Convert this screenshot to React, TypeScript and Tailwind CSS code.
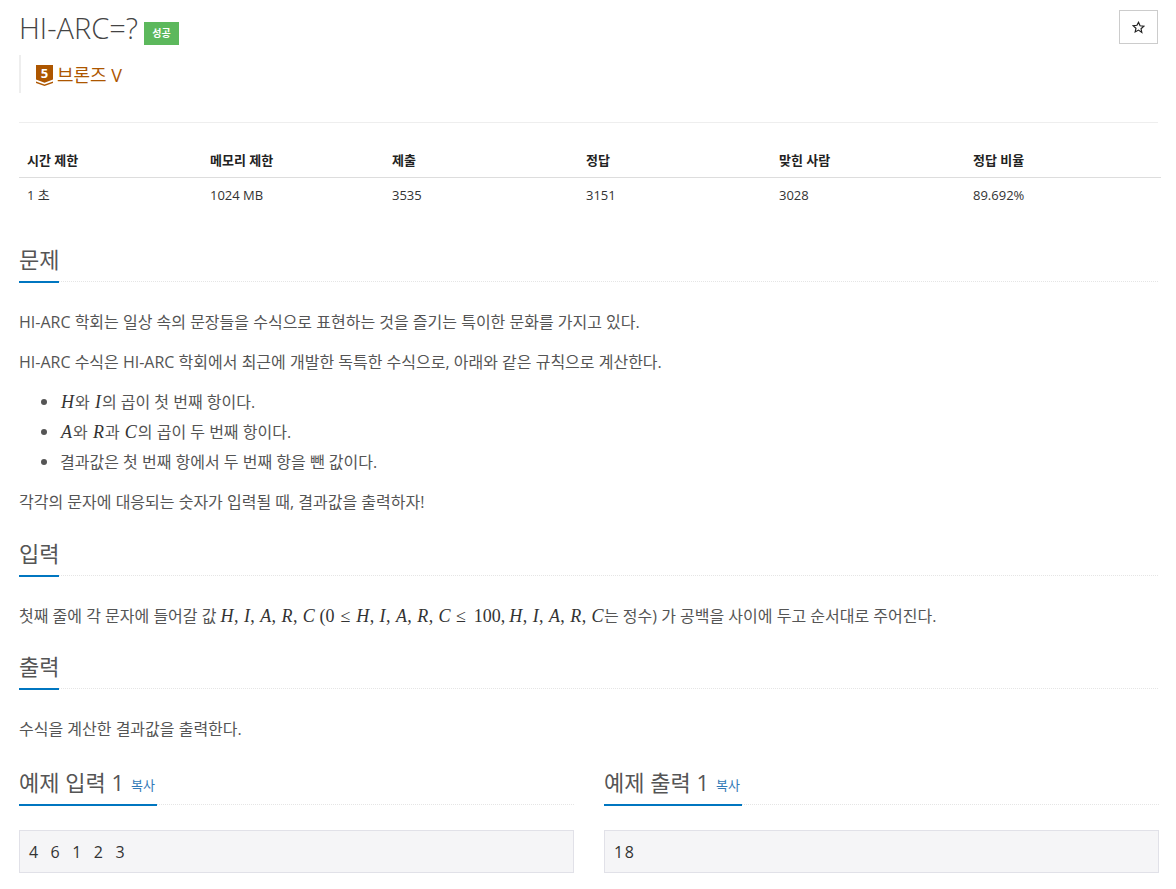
import React from "react";

const font = "font-['Open_Sans','Noto_Sans_CJK_KR',sans-serif]";

const M = ({ children }: { children: React.ReactNode }) => (
  <span className="font-['Liberation_Serif',serif] italic text-[18px] text-[#333] mx-[1px]">{children}</span>
);

const MathList = ({ items }: { items: string[] }) => (
  <span className="font-['Liberation_Serif',serif] italic text-[18px] text-[#333] tracking-[0.4px]">
    {items.map((item, index) => (
      <span key={`math_${index}`}>
        {item}
        {index < items.length - 1 && <span className="not-italic mr-[5px]">,</span>}
      </span>
    ))}
  </span>
);

const SectionHead = ({ title, copy, width }: { title: string; copy?: boolean; width: string }) => (
  <div className="border-b border-dotted border-[#e5e5e5] h-[40px] relative">
    <div className="flex items-baseline h-[34px] leading-[34px]">
      <span className="text-[22px] text-[#555]">{title}</span>
      {copy && <span className="text-[13px] text-[#337ab7] ml-[7px] -translate-y-px">복사</span>}
    </div>
    <div className={`absolute left-0 bottom-[-2px] h-[2px] bg-[#0076c0] ${width}`} />
  </div>
);

const SampleBox = ({ title, value }: { title: string; value: string }) => (
  <div className="flex-1">
    <SectionHead title={title} copy width="w-[138px]" />
    <pre className="mt-[25px] h-[43px] bg-[#f5f5f7] border border-[#e1e1e8] px-[9px] pt-[11px] text-[16px] leading-[20px] tracking-[1.65px] [word-spacing:5px] text-[#333] font-['Open_Sans',sans-serif]">
      {value}
    </pre>
  </div>
);

const Bullet = ({ children }: { children: React.ReactNode }) => (
  <li className="flex items-center h-[20px]">
    <span className="w-[6px] h-[6px] rounded-full bg-[#555] mr-[13px]" />
    <span>{children}</span>
  </li>
);

const stats = [
  ["시간 제한", "1 초", "w-[183px]"],
  ["메모리 제한", "1024 MB", "w-[182px]"],
  ["제출", "3535", "w-[194px]"],
  ["정답", "3151", "w-[193px]"],
  ["맞힌 사람", "3028", "w-[194px]"],
  ["정답 비율", "89.692%", "w-[196px]"],
];

const App = () => {
  return (
    <div className={`${font} bg-white h-[889px] overflow-hidden pl-[19px] pr-[18px] text-[16px] text-[#333]`}>
      <div className="flex justify-between pt-[8px]">
        <div className="flex items-start">
          <h1 className="text-[29px] leading-[40px] font-light text-[#444]">HI-ARC=?</h1>
          <span className="ml-[6px] mt-[14px] w-[35px] h-[23px] bg-[#5cb85c] text-white text-[10px] font-bold flex items-center justify-center">
            성공
          </span>
        </div>
        <button className="w-[39px] h-[34px] mt-[2px] border border-[#ccc] bg-white flex items-center justify-center">
          <svg width="13" height="13" viewBox="0 0 24 24" fill="none" stroke="#222" strokeWidth="2.2">
            <path d="M12 2.5l2.9 6.3 6.9.8-5.1 4.7 1.4 6.8L12 16.8l-6.1 3.4 1.4-6.8L2.200 8.700l6.900-.8z" />
          </svg>
        </button>
      </div>

      <div className="mt-[7px] h-[38px] border-l-[2px] border-[#eee] pl-[15px] flex items-center">
        <svg width="17" height="21" viewBox="0 0 17 21" className="mr-[4px] mt-[2px]">
          <path d="M0 0h17v14.500l-8.500 3.200L0 14.500z" fill="#ad5600" />
          <path d="M0 16.500l8.500 3 8.500-3V18l-8.500 3L0 18z" fill="#ad5600" />
          <text x="8.500" y="12.500" textAnchor="middle" fontSize="13" fontWeight="700" fill="#fff" fontFamily="Open Sans">
            5
          </text>
        </svg>
        <span className="text-[18px] text-[#ad5600] mt-[2px]">브론즈 V</span>
      </div>

      <div className="mt-[29px] border-t border-[#eee]" />

      <table className="mt-[18px] table-fixed w-[1140px] text-[13px]">
        <thead>
          <tr className="border-b border-[#ddd]">
            {stats.map(([head, , w]) => (
              <th key={head} className={`${w} h-[36px] text-left font-bold px-[8px] pt-[3px] text-[#222]`}>
                {head}
              </th>
            ))}
          </tr>
        </thead>
        <tbody>
          <tr>
            {stats.map(([head, value]) => (
              <td key={head} className="h-[36px] px-[8px] pt-[1px] text-[#333]">
                {value}
              </td>
            ))}
          </tr>
        </tbody>
      </table>

      <div className="mt-[29px]">
        <SectionHead title="문제" width="w-[40px]" />
        <div className="mt-[30px] leading-[20px] text-[#555] flex flex-col gap-[20px]">
          <p>HI-ARC 학회는 일상 속의 문장들을 수식으로 표현하는 것을 즐기는 특이한 문화를 가지고 있다.</p>
          <p>HI-ARC 수식은 HI-ARC 학회에서 최근에 개발한 독특한 수식으로, 아래와 같은 규칙으로 계산한다.</p>
          <ul className="pl-[22px] flex flex-col gap-[10px]">
            <Bullet>
              <M>H</M>와 <M>I</M>의 곱이 첫 번째 항이다.
            </Bullet>
            <Bullet>
              <M>A</M>와 <M>R</M>과 <M>C</M>의 곱이 두 번째 항이다.
            </Bullet>
            <Bullet>결과값은 첫 번째 항에서 두 번째 항을 뺀 값이다.</Bullet>
          </ul>
          <p>각각의 문자에 대응되는 숫자가 입력될 때, 결과값을 출력하자!</p>
        </div>
      </div>

      <div className="mt-[24px]">
        <SectionHead title="입력" width="w-[40px]" />
        <p className="mt-[30px] h-[20px] leading-[20px] text-[#555] whitespace-nowrap">
          첫째 줄에 각 문자에 들어갈 값 <MathList items={["H", "I", "A", "R", "C"]} />{" "}
          <span className="font-['Liberation_Serif',serif] text-[18px] text-[#333]">
            (0<span className="mx-[6px]">≤</span>
          </span>
          <MathList items={["H", "I", "A", "R", "C"]} />
          <span className="font-['Liberation_Serif',serif] text-[18px] text-[#333]">
            <span className="ml-[5px] mr-[8px]">≤</span>100,<span className="mr-[4px]" />
          </span>
          <MathList items={["H", "I", "A", "R", "C"]} />는 정수) 가 공백을 사이에 두고 순서대로 주어진다.
        </p>
      </div>

      <div className="mt-[23px]">
        <SectionHead title="출력" width="w-[40px]" />
        <p className="mt-[30px] leading-[20px] text-[#555]">수식을 계산한 결과값을 출력한다.</p>
      </div>

      <div className="mt-[26px] flex gap-[30px] w-[1140px]">
        <SampleBox title="예제 입력 1" value="4 6 1 2 3" />
        <SampleBox title="예제 출력 1" value="18" />
      </div>
    </div>
  );
};

export default App;
